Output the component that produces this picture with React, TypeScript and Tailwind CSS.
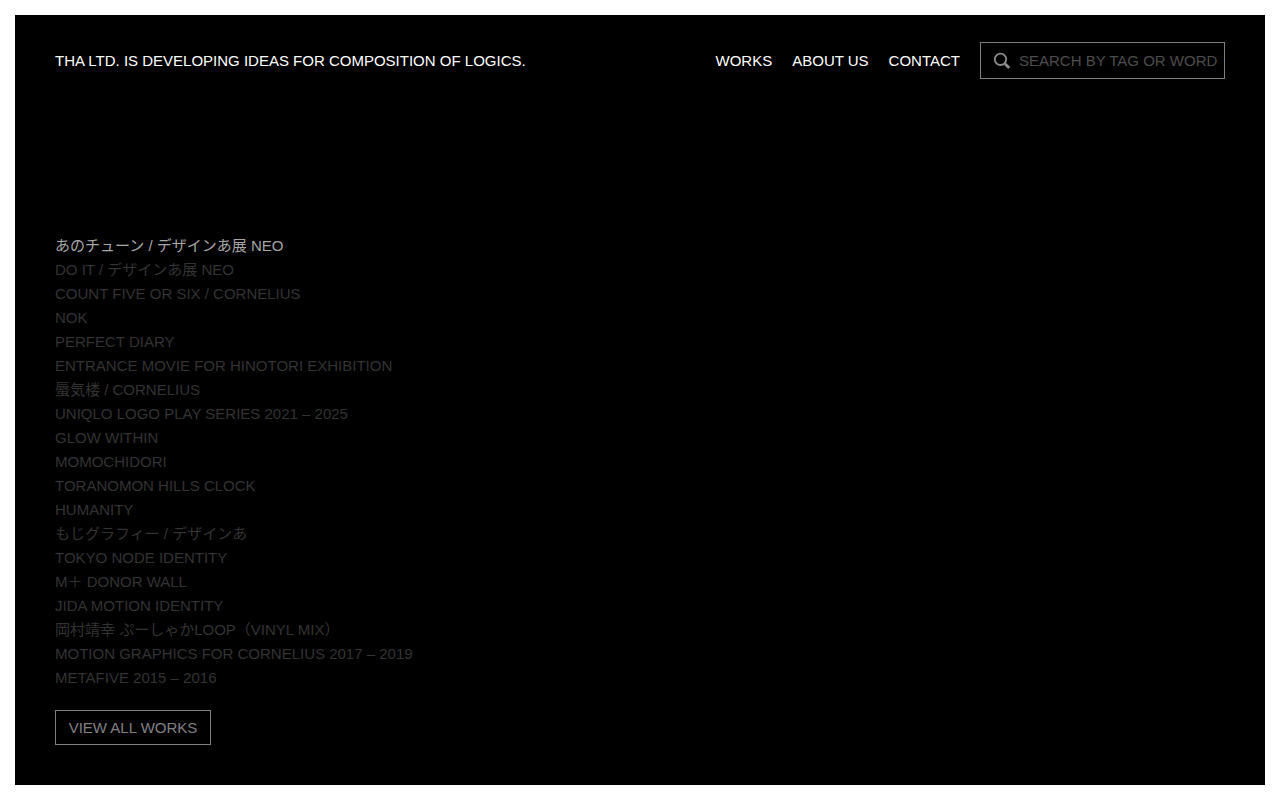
type Work = { title: string; current?: boolean };

const works: Work[] = [
  { title: "あのチューン / デザインあ展 NEO", current: true },
  { title: "DO IT / デザインあ展 NEO" },
  { title: "COUNT FIVE OR SIX / CORNELIUS" },
  { title: "NOK" },
  { title: "PERFECT DIARY" },
  { title: "ENTRANCE MOVIE FOR HINOTORI EXHIBITION" },
  { title: "蜃気楼 / CORNELIUS" },
  { title: "UNIQLO LOGO PLAY SERIES 2021 – 2025" },
  { title: "GLOW WITHIN" },
  { title: "MOMOCHIDORI" },
  { title: "TORANOMON HILLS CLOCK" },
  { title: "HUMANITY" },
  { title: "もじグラフィー / デザインあ" },
  { title: "TOKYO NODE IDENTITY" },
  { title: "M＋ DONOR WALL" },
  { title: "JIDA MOTION IDENTITY" },
  { title: "岡村靖幸 ぷーしゃかLOOP（VINYL MIX）" },
  { title: "MOTION GRAPHICS FOR CORNELIUS 2017 – 2019" },
  { title: "METAFIVE 2015 – 2016" },
];

const navItems = ["WORKS", "ABOUT US", "CONTACT"];

function SearchIcon() {
  return (
    <svg viewBox="0 0 18 18" className="size-[18px] shrink-0" fill="none" aria-hidden="true">
      <circle cx="7.5" cy="7.3" r="5.7" stroke="#8c8c8c" strokeWidth="1.8" />
      <path d="M11.4 11.2L13 12.8" stroke="#8c8c8c" strokeWidth="2" />
      <path d="M12.4 12.2L16.2 16" stroke="#8c8c8c" strokeWidth="3" />
    </svg>
  );
}

function Header() {
  return (
    <header className="flex flex-wrap items-center justify-between gap-5">
      <h1>THA LTD. IS DEVELOPING IDEAS FOR COMPOSITION OF LOGICS.</h1>
      <div className="flex flex-wrap items-center gap-5">
        <nav className="flex gap-5">
          {navItems.map((item) => (
            <a key={item} href="#">
              {item}
            </a>
          ))}
        </nav>
        <form role="search">
          <label className="flex h-[37px] w-[245px] items-center gap-2 border border-[#808080] pl-3">
            <SearchIcon />
            <input
              type="text"
              aria-label="Search by tag or word"
              placeholder="SEARCH BY TAG OR WORD"
              className="min-w-0 flex-1 bg-transparent outline-none placeholder:text-[#4d4d4d]"
            />
          </label>
        </form>
      </div>
    </header>
  );
}

export default function App() {
  return (
    <div className="flex min-h-screen flex-col bg-white p-[15px] font-['Liberation_Sans','Noto_Sans_CJK_JP',sans-serif] text-[15px] leading-6 text-white">
      <div className="flex flex-1 flex-col justify-between gap-10 bg-black px-10 pb-10 pt-[27px]">
        <Header />
        <main className="flex flex-col items-start gap-5">
          <ul>
            {works.map((work) => (
              <li key={work.title} className="h-6">
                <a href="#" className={work.current ? "text-[#a6a6a6]" : "text-[#333333]"}>
                  {work.title}
                </a>
              </li>
            ))}
          </ul>
          <a
            href="#"
            className="flex h-[35px] w-[156px] items-center justify-center border border-[#808080] text-[#808080]"
          >
            VIEW ALL WORKS
          </a>
        </main>
      </div>
    </div>
  );
}
